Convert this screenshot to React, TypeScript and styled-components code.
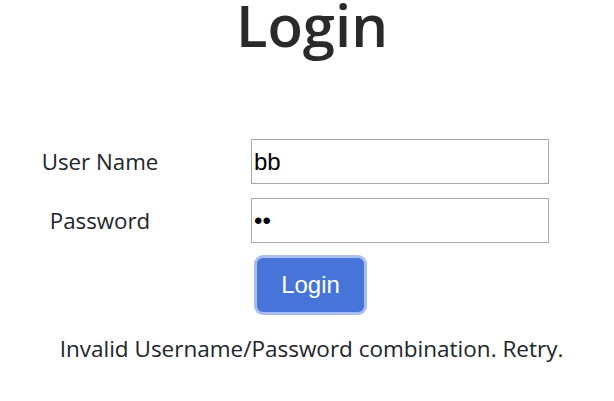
import React from "react";
import styled, { createGlobalStyle } from "styled-components";

const Global = createGlobalStyle`
  html, body { margin: 0; padding: 0; background: #ffffff; }
  body { font-family: "Open Sans", "Noto Sans", sans-serif; color: #212529; }
`;

const Page = styled.div`
  width: 614px;
  height: 401px;
  display: flex;
  flex-direction: column;
  align-items: center;
`;

const Title = styled.h1`
  margin: 0 0 0 10px;
  font-family: "Open Sans", sans-serif;
  font-weight: 600;
  font-size: 58px;
  line-height: 50px;
  color: #2a2a2c;
`;

const Form = styled.form`
  align-self: flex-start;
  margin-top: 89px;
  margin-left: 20px;
  display: grid;
  grid-template-columns: 160px 298px;
  column-gap: 71px;
  row-gap: 14px;
  align-items: center;
`;

const Label = styled.label`
  text-align: center;
  font-size: 22.3px;
  color: #212529;
`;

const Input = styled.input`
  box-sizing: border-box;
  width: 298px;
  height: 45px;
  margin: 0;
  border: 1px solid #a9a9a9;
  padding: 0 2px;
  font-family: "Liberation Sans", Arial, sans-serif;
  font-size: 24px;
  color: #000;
  outline: none;
`;

const ButtonCell = styled.div`
  grid-column: 2;
  padding-left: 6px;
  margin-top: 1px;
  display: flex;
`;

const Button = styled.button`
  box-sizing: border-box;
  width: 107px;
  height: 54px;
  border: none;
  border-radius: 6px;
  background: #4674d8;
  color: #ffffff;
  font-family: "Liberation Sans", Arial, sans-serif;
  font-size: 24px;
  box-shadow: 0 0 0 3px #a9bdef;
  cursor: pointer;
`;

const Message = styled.p`
  margin: 21px 0 0 9px;
  font-size: 22.5px;
  color: #212529;
`;

export default function App() {
  return (
    <Page>
      <Global />
      <Title>Login</Title>
      <Form onSubmit={(e) => e.preventDefault()}>
        <Label>User Name</Label>
        <Input type="text" defaultValue="bb" />
        <Label>Password</Label>
        <Input type="password" defaultValue="bb" />
        <ButtonCell>
          <Button type="submit">Login</Button>
        </ButtonCell>
      </Form>
      <Message>Invalid Username/Password combination. Retry.</Message>
    </Page>
  );
}
